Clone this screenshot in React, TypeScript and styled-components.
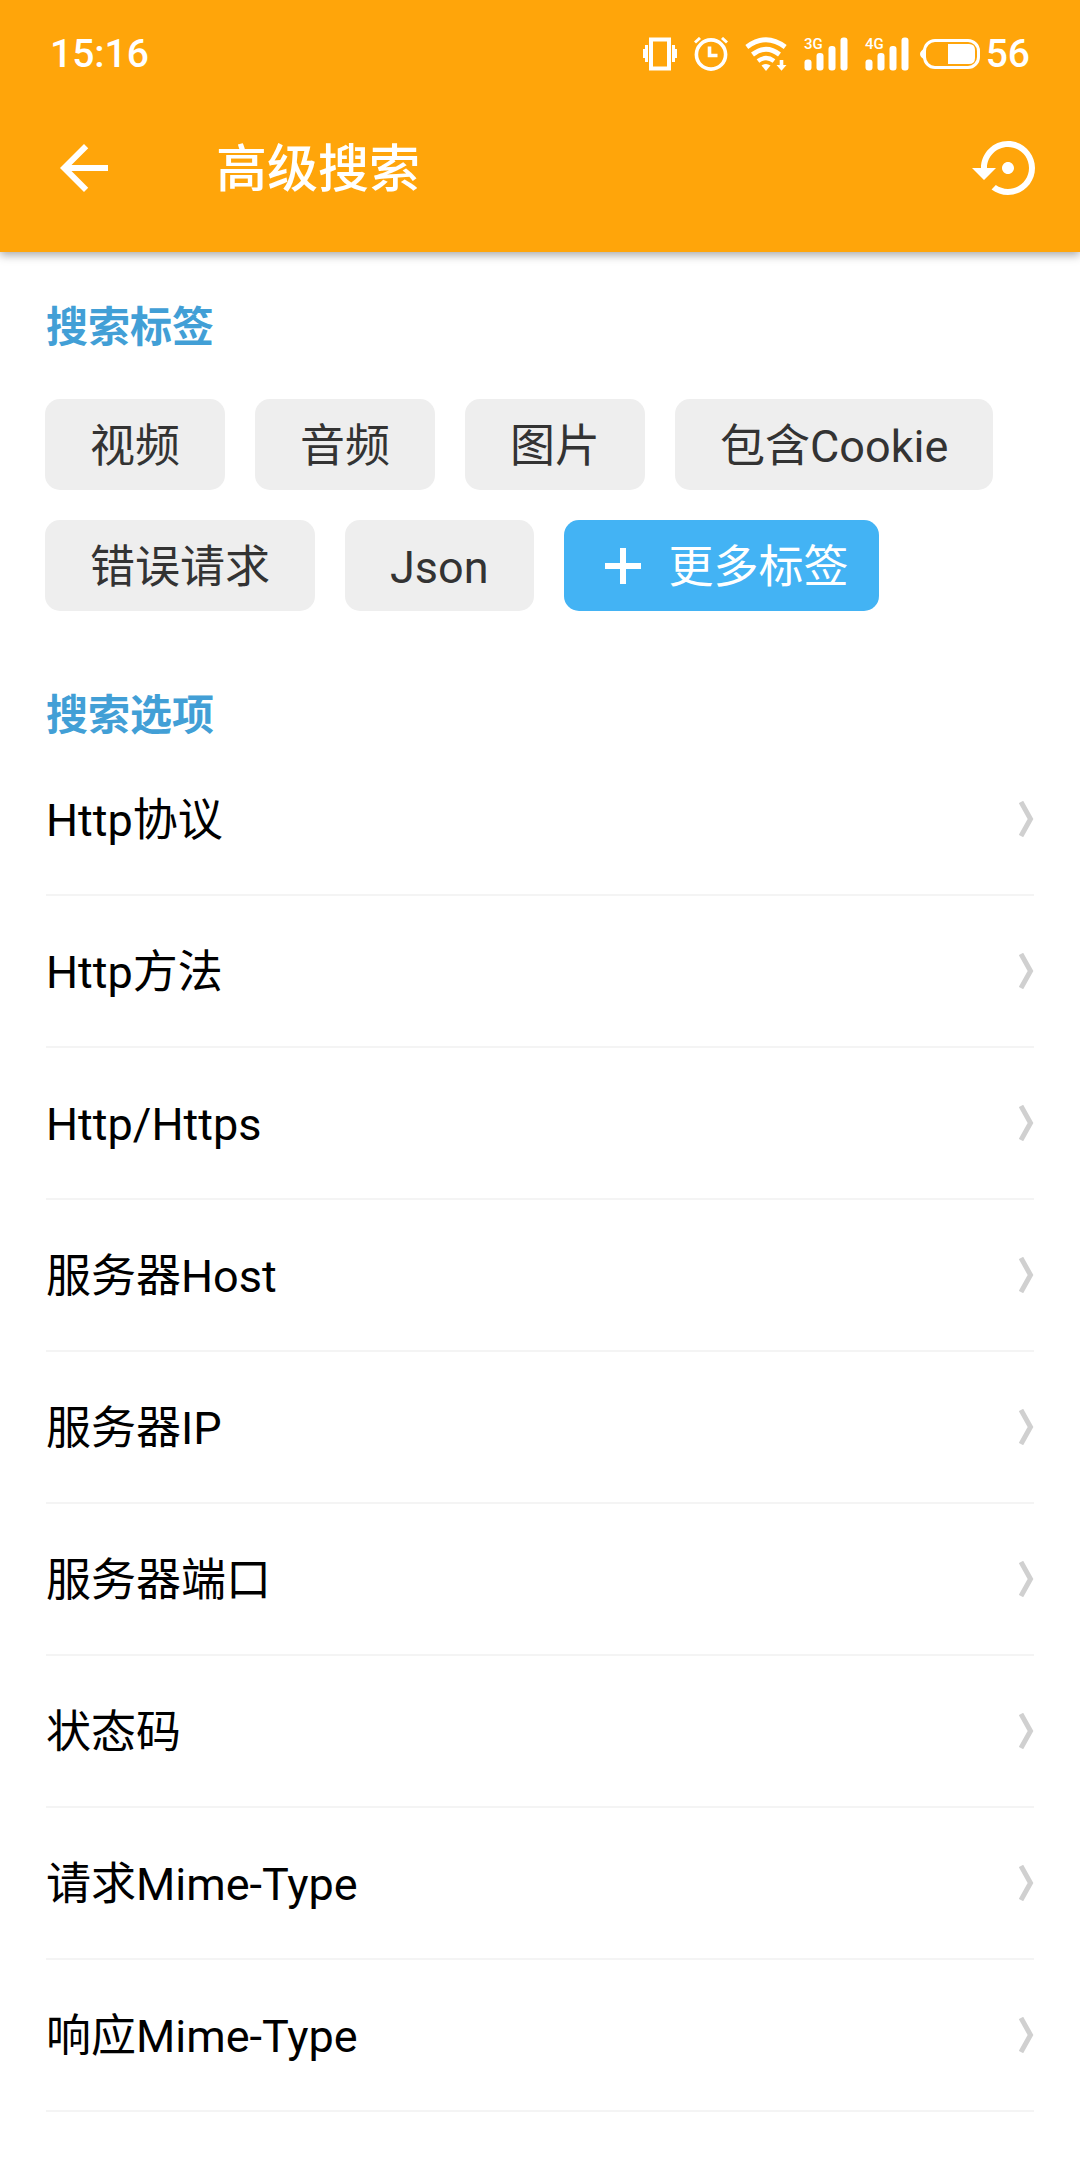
import React from 'react';
import styled, { createGlobalStyle } from 'styled-components';

const GlobalStyle = createGlobalStyle`
  *, *::before, *::after { box-sizing: border-box; }
  body {
    margin: 0;
    background: #fff;
    color: #000;
    font-family: Roboto, "Noto Sans CJK SC", sans-serif;
    font-size: 45px;
  }
  button { font: inherit; color: inherit; border: 0; background: none; padding: 0; cursor: pointer; }
  h1, h2, ul { margin: 0; padding: 0; }
  ul { list-style: none; }
  svg { display: block; flex: none; }
`;

const Header = styled.header`
  position: relative;
  background: #ffa50a;
  color: #fff;
  box-shadow: 0 3px 9px rgba(0, 0, 0, 0.35);
`;

const StatusBar = styled.div`
  display: flex;
  align-items: center;
  justify-content: space-between;
  height: 84px;
  padding: 24px 50px 0;
  font-size: 39px;
  font-weight: 500;
  line-height: 60px;
`;

const StatusIcons = styled.div`
  display: flex;
  align-items: center;
  gap: 17px;
`;

const Battery = styled.div`
  display: flex;
  align-items: center;
  gap: 6px;
  margin-left: -6px;
`;

const Toolbar = styled.div`
  display: flex;
  align-items: center;
  height: 168px;
  padding: 0 36px 0 48px;
`;

const IconButton = styled.button`
  display: flex;
  width: 72px;
  height: 72px;
`;

const Title = styled.h1`
  flex: 1;
  padding: 4px 0 0 96px;
  font-size: 51px;
  font-weight: 500;
  line-height: 72px;
`;

const Main = styled.main`
  padding: 44px 45px;
`;

const SectionTitle = styled.h2`
  padding: 4px 1px 0;
  color: #429fd6;
  font-size: 42px;
  font-weight: 700;
  line-height: 56px;
`;

const Tags = styled.div`
  display: flex;
  flex-wrap: wrap;
  gap: 30px;
  padding: 43px 0 73px;
`;

const Tag = styled.button<{ $primary?: boolean }>`
  display: flex;
  align-items: center;
  gap: 28px;
  height: 91px;
  padding: ${p => (p.$primary ? '0 30px 0 41px' : '0 45px')};
  border-radius: 15px;
  background: ${p => (p.$primary ? '#43b3f4' : '#eee')};
  color: ${p => (p.$primary ? '#fff' : '#333')};
`;

const Label = styled.span`
  padding-top: 4px;
  line-height: 60px;
`;

const Options = styled.ul`
  && { margin: 0 1px; }
`;

const Option = styled.button`
  display: flex;
  align-items: center;
  justify-content: space-between;
  width: 100%;
  height: 152px;
  border-bottom: 2px solid #f4f4f4;
  text-align: left;
`;

const VibrateIcon = () => (
  <svg width="34" height="34" viewBox="0 0 34 34" fill="none" stroke="#fff" aria-hidden="true">
    <path d="M8 2.5H26V31.5H8Z" strokeWidth="4" />
    <path d="M3.5 8V25M30.5 8V25" strokeWidth="3" />
    <path d="M1 12V21M33 12V21" strokeWidth="2" />
  </svg>
);

const AlarmIcon = () => (
  <svg width="34" height="34" viewBox="0 0 34 34" fill="none" stroke="#fff" aria-hidden="true">
    <circle cx="17" cy="17.5" r="14.6" strokeWidth="3.6" />
    <path d="M15.5 9.5V18.5H23.5" strokeWidth="3.6" />
    <path d="M1 5.5L6 1M33 5.5L28 1" strokeWidth="3" />
  </svg>
);

const WifiIcon = () => (
  <svg width="42" height="34" viewBox="0 0 42 34" fill="none" stroke="#fff" aria-hidden="true">
    <path d="M1.8 10Q21 -4.5 40.2 10" strokeWidth="4.8" />
    <path d="M7.5 17.5Q21 7 34.5 17.5" strokeWidth="4.8" />
    <path d="M13 24Q21 18 29 24" strokeWidth="4.4" />
    <path d="M16.5 28.5Q21 25.5 25.5 28.5L21 34Z" fill="#fff" stroke="none" />
    <path d="M34.7 23H38.3V28H41.5L36.5 33.8L31.5 28H34.7Z" fill="#fff" stroke="none" />
  </svg>
);

const Signal = styled.svg`
  overflow: visible;
`;

const Network = styled.text`
  font-family: Roboto, sans-serif;
  font-size: 15px;
  font-weight: 500;
`;

const SignalIcon = ({ label }: { label: string }) => (
  <Signal width="44" height="34" viewBox="0 0 44 34" fill="#fff" role="img" aria-label={label}>
    <rect x="0.5" y="22.5" width="7" height="11" rx="3" />
    <rect x="12.5" y="16" width="7" height="17.5" rx="3" />
    <rect x="24.5" y="9" width="7" height="24.5" rx="3" />
    <rect x="36.5" y="0.5" width="7" height="33" rx="3" />
    <Network x="0" y="12">{label}</Network>
  </Signal>
);

const BatteryIcon = () => (
  <svg width="60" height="32" viewBox="0 0 60 32" aria-hidden="true">
    <path d="M4.5 10.5Q0 13 0 16T4.5 21.5Z" fill="#fff" />
    <rect x="4.5" y="2.5" width="54" height="27" rx="10.5" fill="none" stroke="#fff" strokeWidth="3" />
    <path d="M28 6H49Q55 6 55 12V20Q55 26 49 26H28Z" fill="#fff" />
  </svg>
);

const BackIcon = () => (
  <svg width="72" height="72" viewBox="0 0 24 24" fill="#fff" aria-hidden="true">
    <path d="M20 11H7.83l5.59-5.59L12 4l-8 8 8 8 1.41-1.41L7.83 13H20v-2z" />
  </svg>
);

const RestoreIcon = () => (
  <svg width="72" height="72" viewBox="0 0 24 24" fill="#fff" aria-hidden="true">
    <path d="M14 12c0-1.1-.9-2-2-2s-2 .9-2 2 .9 2 2 2 2-.9 2-2zm-2-9c-4.97 0-9 4.03-9 9H0l4 4 4-4H5c0-3.87 3.13-7 7-7s7 3.13 7 7-3.13 7-7 7c-1.51 0-2.91-.49-4.06-1.3l-1.42 1.44C8.04 20.3 9.94 21 12 21c4.97 0 9-4.03 9-9s-4.03-9-9-9z" />
  </svg>
);

const PlusIcon = () => (
  <svg width="36" height="36" viewBox="0 0 36 36" stroke="#fff" strokeWidth="6" aria-hidden="true">
    <path d="M18 0V36M0 18H36" />
  </svg>
);

const ChevronIcon = () => (
  <svg width="15" height="36" viewBox="0 0 15 36" fill="none" stroke="#d0d0d0" strokeWidth="5" aria-hidden="true">
    <path d="M2 1L11.5 18L2 35" />
  </svg>
);

const tags = ['视频', '音频', '图片', '包含Cookie', '错误请求', 'Json'];

const options = [
  'Http协议',
  'Http方法',
  'Http/Https',
  '服务器Host',
  '服务器IP',
  '服务器端口',
  '状态码',
  '请求Mime-Type',
  '响应Mime-Type',
];

export default function App() {
  return (
    <>
      <GlobalStyle />
      <Header>
        <StatusBar>
          <span>15:16</span>
          <StatusIcons>
            <VibrateIcon />
            <AlarmIcon />
            <WifiIcon />
            <SignalIcon label="3G" />
            <SignalIcon label="4G" />
            <Battery>
              <BatteryIcon />
              <span>56</span>
            </Battery>
          </StatusIcons>
        </StatusBar>
        <Toolbar>
          <IconButton type="button" aria-label="返回"><BackIcon /></IconButton>
          <Title>高级搜索</Title>
          <IconButton type="button" aria-label="重置"><RestoreIcon /></IconButton>
        </Toolbar>
      </Header>
      <Main>
        <SectionTitle>搜索标签</SectionTitle>
        <Tags>
          {tags.map(tag => (
            <Tag type="button" key={tag}>
              <Label>{tag}</Label>
            </Tag>
          ))}
          <Tag type="button" $primary>
            <PlusIcon />
            <Label>更多标签</Label>
          </Tag>
        </Tags>
        <SectionTitle>搜索选项</SectionTitle>
        <Options>
          {options.map(option => (
            <li key={option}>
              <Option type="button">
                <Label>{option}</Label>
                <ChevronIcon />
              </Option>
            </li>
          ))}
        </Options>
      </Main>
    </>
  );
}
